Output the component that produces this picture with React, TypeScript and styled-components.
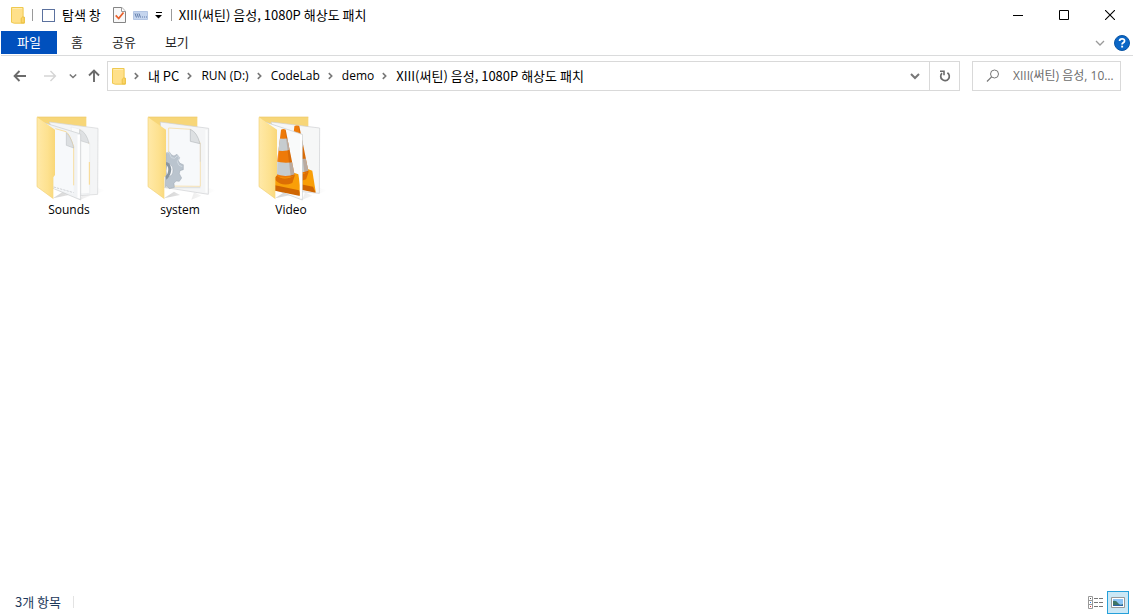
import React from "react";
import styled, { createGlobalStyle, css } from "styled-components";

const Global = createGlobalStyle`
  * { box-sizing: border-box; }
  body { margin: 0; background: #fff; }
  button, input { font: inherit; color: inherit; }
  svg { flex: none; }
`;

const latinFont = css`
  font: 12px/18px "Open Sans", "Noto Sans CJK KR", sans-serif;
`;

const Window = styled.div`
  display: flex;
  flex-direction: column;
  min-height: 100vh;
  padding: 0 1px;
  background: #fff;
  color: #000;
  font: 13px/18px "Noto Sans CJK KR", sans-serif;
  white-space: nowrap;
`;

const plainButton = css`
  display: flex;
  align-items: center;
  justify-content: center;
  padding: 0;
  border: 0;
  background: transparent;
`;

const TitleBar = styled.header`
  display: flex;
  align-items: center;
  height: 30px;
  padding-left: 10px;
`;

const Divider = styled.span<{ $color?: string }>`
  width: 1px;
  height: 12px;
  background: ${(p) => p.$color ?? "#9a9a9a"};
`;

const AppIcon = styled.span`
  display: flex;
  margin-right: 7px;
`;

const PaneToggle = styled.label`
  display: flex;
  align-items: center;
  gap: 7px;
  margin: 0 12px 0 9px;
`;

const Checkbox = styled.input`
  appearance: none;
  width: 13px;
  height: 13px;
  margin: 0;
  border: 1px solid #5b719e;
  background: #fff;
`;

const QuickTools = styled.div`
  display: flex;
  align-items: center;
  gap: 7px;
  margin-right: 8px;
`;

const ToolButton = styled.button`
  ${plainButton}
`;

const Title = styled.h1`
  flex: 1;
  margin: 0 0 0 7px;
  font-size: 13px;
  font-weight: 400;
  line-height: 18px;
`;

const CaptionButton = styled.button`
  ${plainButton}
  width: 46px;
  height: 30px;
`;

const Ribbon = styled.nav`
  display: flex;
  align-items: flex-start;
  height: 26px;
  padding-top: 1px;
  border-bottom: 1px solid #dadbdc;
  color: #262626;
`;

const Tab = styled.button`
  ${plainButton}
  height: 23px;
  padding: 0 14px 2px;
`;

const FileTab = styled(Tab)`
  width: 56px;
  background: #0050bd;
  color: #fff;
`;

const Tabs = styled.div`
  display: flex;
  flex: 1;
  gap: 1px;
`;

const RibbonTools = styled.div`
  display: flex;
  align-items: center;
  gap: 9px;
  height: 24px;
  padding-right: 3px;
`;

const NavBar = styled.div`
  display: flex;
  align-items: center;
  gap: 12px;
  padding: 5px 12px 5px 4px;
`;

const History = styled.div`
  display: flex;
  align-items: center;
`;

const NavButton = styled.button<{ $width?: number }>`
  ${plainButton}
  width: ${(p) => p.$width ?? 30}px;
  height: 30px;
`;

const AddressGroup = styled.div`
  display: flex;
  flex: 1;
  min-width: 0;
`;

const AddressBar = styled.div`
  display: flex;
  flex: 1;
  align-items: center;
  min-width: 0;
  height: 30px;
  padding-left: 4px;
  border: 1px solid #d9d9d9;
`;

const Crumbs = styled.ol`
  display: flex;
  flex: 1;
  align-items: center;
  min-width: 0;
  margin: 0;
  padding: 0;
  overflow: hidden;
  list-style: none;
`;

const Crumb = styled.li`
  display: flex;
  align-items: center;
`;

const CrumbLink = styled.a<{ $latin: boolean }>`
  color: #000;
  text-decoration: none;
  ${(p) => p.$latin && latinFont}
`;

const Chevron = styled.svg`
  margin: 0 9px 0 8px;
`;

const DropButton = styled.button`
  ${plainButton}
  width: 28px;
  height: 28px;
`;

const RefreshButton = styled.button`
  ${plainButton}
  width: 30px;
  height: 28px;
  border-left: 1px solid #d9d9d9;
`;

const SearchBox = styled.label`
  display: flex;
  align-items: center;
  gap: 13px;
  width: 149px;
  height: 30px;
  padding-left: 13px;
  border: 1px solid #d9d9d9;
`;

const SearchInput = styled.input`
  flex: 1;
  min-width: 0;
  padding: 0;
  border: 0;
  outline: 0;
  background: transparent;
  text-overflow: ellipsis;
  ${latinFont}
  &::placeholder { color: #6d6d6d; opacity: 1; }
`;

const Content = styled.main`
  display: flex;
  flex: 1;
  flex-wrap: wrap;
  align-content: flex-start;
  gap: 15px;
  padding: 17px 20px;
`;

const FolderTile = styled.button`
  ${plainButton}
  flex-direction: column;
  width: 96px;
  ${latinFont}
`;

const StatusBar = styled.footer`
  display: flex;
  align-items: center;
  justify-content: space-between;
  height: 26px;
  padding: 0 4px 0 14px;
  color: #1e395b;
`;

const StatusText = styled.span`
  display: flex;
  align-items: center;
  gap: 12px;
`;

const ViewButtons = styled.div`
  display: flex;
  align-items: center;
  gap: 1px;
`;

const ViewButton = styled.button<{ $active?: boolean }>`
  ${plainButton}
  width: ${(p) => (p.$active ? 22 : 20)}px;
  height: 23px;
  border: ${(p) => (p.$active ? "1px solid #26a0da" : "0")};
  background: ${(p) => (p.$active ? "#cbe8f6" : "transparent")};
`;

const SmallFolder = () => (
  <svg width="14" height="17" viewBox="0 0 14 17" aria-hidden="true">
    <path d="M.5.5h11.6v10h1.2v5.7H3.2L.5 15.3z" fill="#ffe08a" stroke="#efc94f" />
    <path d="M10.2 15.8v-4.6l1.3-1.2h1.8v5.8z" fill="#fbd568" stroke="#e9bd3b" strokeWidth=".8" />
    <path d="M1.6 1.5h9.4" stroke="#ffebaf" />
  </svg>
);

const CrumbChevron = () => (
  <Chevron width="5" height="8" viewBox="0 0 5 8" aria-hidden="true">
    <path d="M.8 1.2 3.7 4 .8 6.8" fill="none" stroke="#777" strokeWidth="1.6" />
  </Chevron>
);

const Down = ({ size = 9, color = "#777", weight = 1.8 }) => (
  <svg width={size} height={size} viewBox="0 0 10 10" aria-hidden="true">
    <path d="M1 3l4 4 4-4" fill="none" stroke={color} strokeWidth={weight} />
  </svg>
);

const Arrow = ({ color, turn = 0 }: { color: string; turn?: number }) => (
  <svg width="14" height="14" viewBox="0 0 14 14" aria-hidden="true">
    <path
      d="M13 7H2M6.5 2 1.6 7l4.9 5"
      transform={`rotate(${turn} 7 7)`}
      fill="none"
      stroke={color}
      strokeWidth={turn === 180 ? 1.4 : 1.9}
    />
  </svg>
);

type Kind = "sounds" | "system" | "video";

const DocumentPages = () => (
  <>
    <path d="M49 27 195 46 194 244 140 248z" fill="#f4f5f6" stroke="#d3d5d7" strokeWidth="2" />
    <path d="M114 42 140 48q12 2 16 15l14 28v150l-28 2z" fill="#fafbfb" stroke="#dcdee0" />
    <path d="M140 49q10 8 12 26l17 17" fill="none" stroke="#f5d68c" strokeWidth="2" />
    <path d="M140 50q20 8 28 41l-29-9z" fill="#dfe1e3" stroke="#b9bcbf" strokeWidth="1.5" />
    <path d="M169 147v68" stroke="#f8d88c" strokeWidth="3" />
    <path d="M26 27 143 63v198L60 226z" fill="#f1f3f5" stroke="#c8cbcd" strokeWidth="2" />
    <path d="M67 49 103 55l19 46v142l-60-17V50z" fill="#f7f9fb" />
    <path d="M67 47 99 56q10 5 23 45v116" fill="none" stroke="#f8d98f" strokeWidth="2.5" />
    <path d="M100 59q16 16 22 46l-22-8z" fill="#dcdfe1" stroke="#b5b9bc" strokeWidth="1.5" />
    <path d="M62 222 122 239" stroke="#b9bdc1" strokeWidth="2" strokeDasharray="7 3" />
    <path d="M137 66v189" stroke="#fff" strokeWidth="7" />
  </>
);

const SystemPage = () => (
  <>
    <path d="M49 27 194 46 193 244 60 223z" fill="#f4f5f6" stroke="#cdcfd1" strokeWidth="2" />
    <path d="M74 45 140 49 169 91v129L74 219z" fill="#f7f9fb" stroke="#f6d792" strokeWidth="2" />
    <path d="M139 49q20 8 29 43l-29-7z" fill="#dde0e2" stroke="#b5b9bc" strokeWidth="2" />
    <path d="M169 92v54M62 224h107" stroke="#cfd2d5" strokeWidth="2" />
    <path d="M187 51v188" stroke="#fff" strokeWidth="6" opacity=".8" />
    <path
      fillRule="evenodd"
      d="M66 120l10-3 7 9 7 3 9-5 8 10-4 9 5 8 10 4v15l-10 3-2 9 7 13-7 10-10-1-6 7 1 12-15 4-7-8-5 2zM75 152q-9 6-9 21t8 18q13-3 13-20 0-15-12-19z"
      fill="#bac4ce"
      stroke="#8f9ba6"
      strokeWidth="1.2"
    />
    <path d="M67 120l9-2 6 16 10 2 8-8 6 7-6 11 5 11 10 4" fill="none" stroke="#d0d9e1" strokeWidth="3" />
    <path d="M65 147q14 0 17 22-2 21-15 31l-2-11q8-6 8-20 0-11-8-14z" fill="#8995a0" />
  </>
);

const Cone = ({ id }: { id: string }) => (
  <>
    <clipPath id={id}>
      <path d="M78 50q7-4 14 0l27 137q-29 15-58 0z" />
    </clipPath>
    <path d="M60 184 119 180 130 184 140 248 60 232z" fill="#f99f08" />
    <path d="M60 217 132 232 140 250 60 233z" fill="#cf6502" />
    <path d="M61 184q25 24 59 2l-8 24q-30 13-51-9z" fill="#dc6e04" />
    <g clipPath={`url(#${id})`}>
      <path d="M55 40h75v170H55z" fill="#ee7a08" />
      <path d="M50 71q33 12 60 2v36q-30 11-60-2zM50 142q38 13 76 3v36q-38 17-76-3z" fill="#c6cccf" />
      <path d="M77 40 65 206H54V75z" fill="#fff" opacity=".2" />
      <path d="M89 40 109 205h20L95 40z" fill="#8f3500" opacity=".22" />
    </g>
  </>
);

const VideoPages = () => (
  <>
    <path d="M49 27 194 45 193 241 60 228z" fill="#f6f7f7" stroke="#cdcfd1" strokeWidth="2" />
    <g transform="translate(38 -11) scale(1.03 1)"><Cone id="cone-back" /></g>
    <path d="M24 25 142 64v197L60 230z" fill="#f9fafa" stroke="#c6c8ca" strokeWidth="2" />
    <svg x="60" y="30" width="74" height="225" viewBox="60 30 74 225"><Cone id="cone-front" /></svg>
    <path d="M138 66v190" stroke="#fff" strokeWidth="6" />
  </>
);

const pages: Record<Kind, React.FC> = { sounds: DocumentPages, system: SystemPage, video: VideoPages };

const Folder = ({ kind }: { kind: Kind }) => {
  const Pages = pages[kind];
  return (
    <svg width="72" height="88" viewBox="0 0 216 264" aria-hidden="true">
      <defs>
        <linearGradient id={`flap-${kind}`} x1="0" x2="1">
          <stop offset="0" stopColor="#ffe9a8" />
          <stop offset=".6" stopColor="#fde18f" />
          <stop offset="1" stopColor="#f9d778" />
        </linearGradient>
        <linearGradient id={`shade-${kind}`}>
          <stop stopColor="#bbb" stopOpacity=".65" />
          <stop offset="1" stopColor="#ccc" stopOpacity="0" />
        </linearGradient>
      </defs>
      <path d="M60 256 108 246 90 236zM142 260 172 248 150 238zM190 244 216 232 192 224z" fill={`url(#shade-${kind})`} />
      <path d="M12 12h148v60H12z" fill="#f7d678" />
      <path d="M12 12h148" stroke="#efc968" strokeWidth="2" />
      <Pages />
      <path d="M12 13 66 50v136l-5 7v64L12 221z" fill={`url(#flap-${kind})`} />
      <path d="M12 13v208l49 36" fill="none" stroke="#f2d27a" strokeWidth="2" />
    </svg>
  );
};

const path = [
  { name: "내 PC", latin: false },
  { name: "RUN (D:)", latin: true },
  { name: "CodeLab", latin: true },
  { name: "demo", latin: true },
  { name: "XIII(써틴) 음성, 1080P 해상도 패치", latin: false },
];

const folders: { name: string; kind: Kind }[] = [
  { name: "Sounds", kind: "sounds" },
  { name: "system", kind: "system" },
  { name: "Video", kind: "video" },
];

export default function App() {
  return (
    <>
      <Global />
      <Window>
        <TitleBar>
          <AppIcon><SmallFolder /></AppIcon>
          <Divider />
          <PaneToggle>
            <Checkbox type="checkbox" />
            탐색 창
          </PaneToggle>
          <QuickTools>
            <ToolButton aria-label="속성">
              <svg width="13" height="16" viewBox="0 0 13 16">
                <path d="M.5.5h8.3l3.7 3.7v11.3H.5z" fill="#f8f8f8" stroke="#858585" />
                <path d="M8.5.5v4h4" fill="#fff" stroke="#999" />
                <path d="m2.7 8.3 3 3.2 4.8-6" fill="none" stroke="#e8602c" strokeWidth="1.8" />
              </svg>
            </ToolButton>
            <ToolButton aria-label="이름 바꾸기">
              <svg width="15" height="9" viewBox="0 0 15 9">
                <path d="M.5.5h14v8H.5z" fill="#c5d5ee" stroke="#b3c5e3" />
                <path d="m2 2.500 1.500 4m.5-4 1.500 4m.5-4 1.500 4M9 6h1m1 0h1m1 0h1" stroke="#607ba8" />
              </svg>
            </ToolButton>
            <ToolButton aria-label="빠른 실행 도구 모음 사용자 지정">
              <svg width="8" height="8" viewBox="0 0 8 8">
                <path d="M1 1h6v1H1zM0 4h7L3.500 7.500z" fill="#000" />
              </svg>
            </ToolButton>
          </QuickTools>
          <Divider />
          <Title>XIII(써틴) 음성, 1080P 해상도 패치</Title>
          <CaptionButton aria-label="최소화">
            <svg width="10" height="10"><path d="M0 5.500h10" stroke="#000" /></svg>
          </CaptionButton>
          <CaptionButton aria-label="최대화">
            <svg width="10" height="10"><path d="M.5.5h9v9h-9z" fill="none" stroke="#000" /></svg>
          </CaptionButton>
          <CaptionButton aria-label="닫기">
            <svg width="10" height="10"><path d="m0 0 10 10M10 0 0 10" stroke="#000" strokeWidth="1.1" /></svg>
          </CaptionButton>
        </TitleBar>

        <Ribbon>
          <FileTab>파일</FileTab>
          <Tabs>
            <Tab>홈</Tab>
            <Tab>공유</Tab>
            <Tab>보기</Tab>
          </Tabs>
          <RibbonTools>
            <ToolButton aria-label="리본 확장"><Down size={10} color="#9a9a9a" weight={1.3} /></ToolButton>
            <ToolButton aria-label="도움말">
              <svg width="16" height="16" viewBox="0 0 16 16">
                <circle cx="8" cy="8" r="7.5" fill="#0a66c6" stroke="#0a55a4" />
                <path d="M5.600 6.100q0-2.200 2.500-2.200t2.400 2q0 1-1.300 1.800Q8.100 8.400 8.100 9.400" fill="none" stroke="#fff" strokeWidth="1.8" />
                <path d="M7.200 10.700h1.900v1.800H7.200z" fill="#fff" />
              </svg>
            </ToolButton>
          </RibbonTools>
        </Ribbon>

        <NavBar>
          <AddressGroup>
            <History>
              <NavButton aria-label="뒤로"><Arrow color="#6b6b6b" /></NavButton>
              <NavButton aria-label="앞으로"><Arrow color="#d5d5d5" turn={180} /></NavButton>
              <NavButton $width={16} aria-label="최근 위치"><Down size={8} /></NavButton>
              <NavButton $width={26} aria-label="위로"><Arrow color="#6b6b6b" turn={90} /></NavButton>
            </History>
            <AddressBar>
              <SmallFolder />
              <Crumbs>
                {path.map((p) => (
                  <Crumb key={p.name}>
                    <CrumbChevron />
                    <CrumbLink href="#" $latin={p.latin}>{p.name}</CrumbLink>
                  </Crumb>
                ))}
              </Crumbs>
              <DropButton aria-label="이전 위치"><Down size={10} weight={2} /></DropButton>
              <RefreshButton aria-label="새로 고침">
                <svg width="12" height="12" viewBox="0 0 12 12">
                  <path d="M8.400 2.700A4.300 4.300 0 1 1 3 3.200" fill="none" stroke="#6b6b6b" strokeWidth="1.7" />
                  <path d="M1 1.200h4v4" fill="none" stroke="#6b6b6b" strokeWidth="1.6" />
                </svg>
              </RefreshButton>
            </AddressBar>
          </AddressGroup>
          <SearchBox>
            <svg width="14" height="14" viewBox="0 0 14 14" aria-hidden="true">
              <circle cx="8.5" cy="5" r="4" fill="none" stroke="#777" />
              <path d="M5.600 7.900 1 12.500" stroke="#777" strokeWidth="1.2" />
            </svg>
            <SearchInput aria-label="검색" placeholder="XIII(써틴) 음성, 1080P 해상도 패치 검색" />
          </SearchBox>
        </NavBar>

        <Content>
          {folders.map((f) => (
            <FolderTile key={f.name}>
              <Folder kind={f.kind} />
              {f.name}
            </FolderTile>
          ))}
        </Content>

        <StatusBar>
          <StatusText>
            3개 항목
            <Divider $color="#e3e3e3" />
          </StatusText>
          <ViewButtons>
            <ViewButton aria-label="자세히">
              <svg width="16" height="13" viewBox="0 0 16 13">
                <path d="M.5.5h4v12h-4zM.5 4.500h4M.5 8.500h4" fill="#fff" stroke="#999" />
                <path d="M6 2.500h4m1 0h4M6 6.500h4m1 0h4M6 10.500h4m1 0h4" stroke="#777" />
                <path d="M2 2h1v1H2z" fill="#555" />
                <path d="M2 6h1v1H2z" fill="#2b7de0" />
                <path d="M2 10h1v1H2z" fill="#d33" />
              </svg>
            </ViewButton>
            <ViewButton $active aria-label="큰 아이콘">
              <svg width="14" height="11" viewBox="0 0 14 11">
                <path d="M.5.5h13v10H.5z" fill="#fff" stroke="#999" />
                <path d="M2 2h10v7H2z" fill="#8cc4f5" />
                <path d="M2 4q3-1 5 2t5 1v2H2z" fill="#3e7566" />
                <path d="M2 8h10v1H2z" fill="#2a62a8" />
              </svg>
            </ViewButton>
          </ViewButtons>
        </StatusBar>
      </Window>
    </>
  );
}
